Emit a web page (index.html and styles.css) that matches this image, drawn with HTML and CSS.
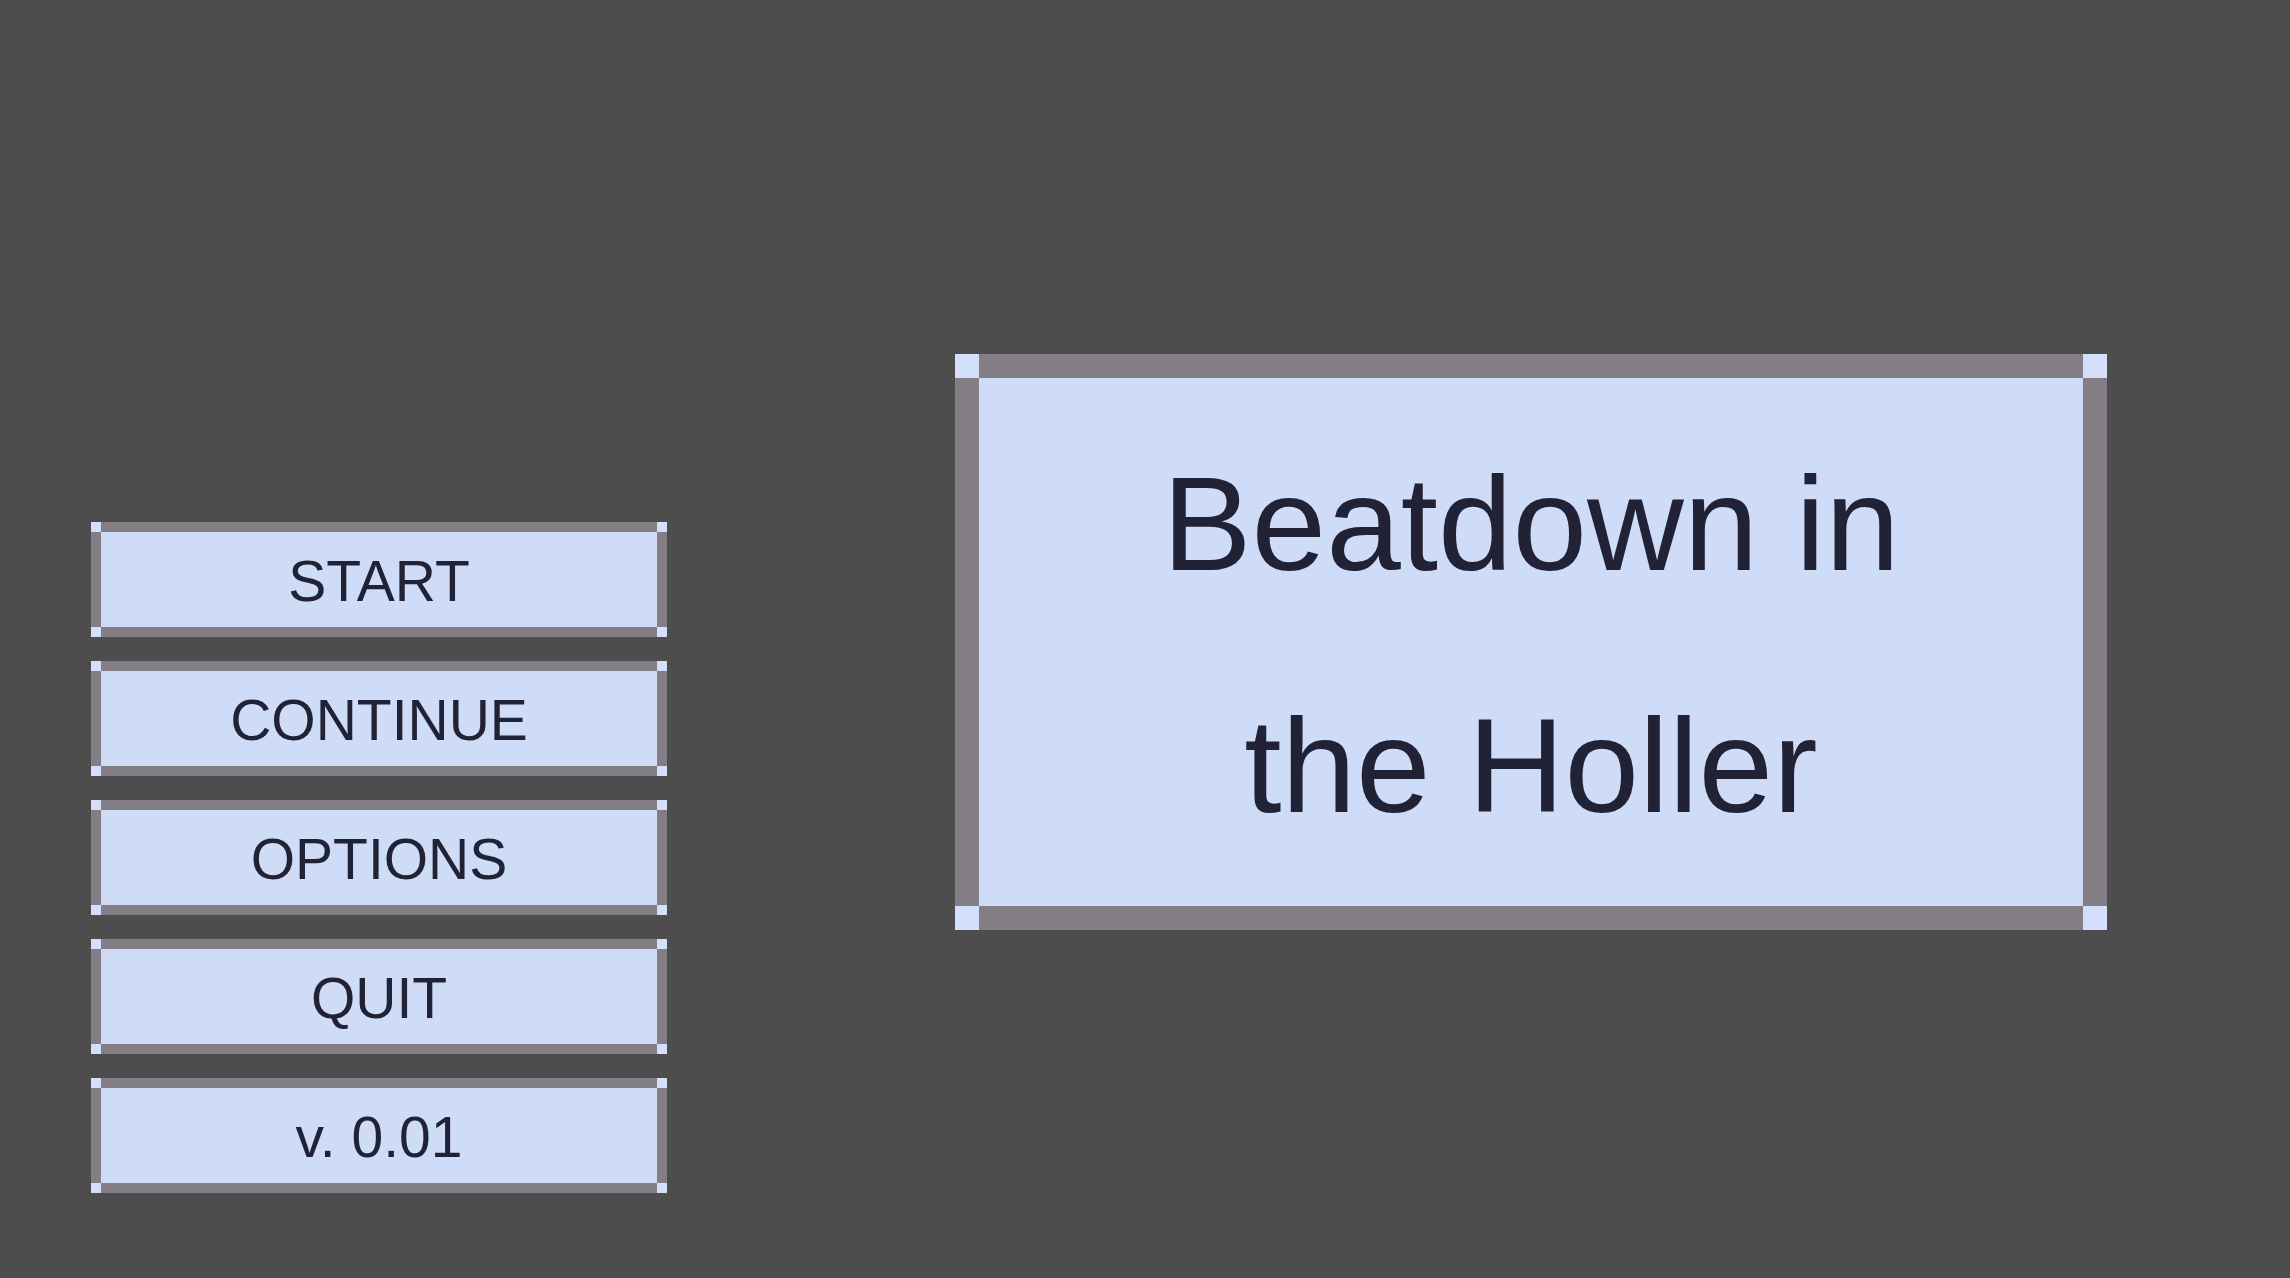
FILE: index.html
```html
<!DOCTYPE html>
<html lang="en">
<head>
    <meta charset="UTF-8">
    <meta name="viewport" content="width=device-width, initial-scale=1.0">
    <title>Beatdown in the Holler</title>
    <link rel="stylesheet" href="styles.css">
</head>
<body>
    <div class="screen">
        <nav class="menu">
            <button class="frame menu-btn" id="start-btn">START</button>
            <button class="frame menu-btn" id="continue-btn">CONTINUE</button>
            <button class="frame menu-btn" id="options-btn">OPTIONS</button>
            <button class="frame menu-btn" id="quit-btn">QUIT</button>
            <div class="frame menu-btn version">v. 0.01</div>
        </nav>
        <div class="frame title-box">
            <h1>Beatdown in<br>the Holler</h1>
        </div>
    </div>
</body>
</html>
```

FILE: styles.css
```css
body {
    margin: 0;
    padding: 0;
    background: #4d4d4d;
    font-family: 'Liberation Sans', Arial, sans-serif;
    color: #222236;
    height: 100vh;
    overflow: hidden;
}
.screen {
    display: flex;
    align-items: flex-start;
    padding-left: 91px;
}

/* pixel frame: grey rim, light corner squares, pale blue fill */
.frame {
    --edge: 10px;
    --rim: #837e86;
    --fill: #cfdcf7;
    --corner: #d4e0fb;
    box-sizing: border-box;
    border: none;
    padding: var(--edge);
    background:
        linear-gradient(var(--rim), var(--rim)) top / calc(100% - 2 * var(--edge)) var(--edge) no-repeat,
        linear-gradient(var(--rim), var(--rim)) bottom / calc(100% - 2 * var(--edge)) var(--edge) no-repeat,
        linear-gradient(var(--rim), var(--rim)) left / var(--edge) calc(100% - 2 * var(--edge)) no-repeat,
        linear-gradient(var(--rim), var(--rim)) right / var(--edge) calc(100% - 2 * var(--edge)) no-repeat,
        linear-gradient(var(--fill), var(--fill)) center / calc(100% - 2 * var(--edge)) calc(100% - 2 * var(--edge)) no-repeat,
        var(--corner);
}

.menu {
    display: flex;
    flex-direction: column;
    gap: 24px;
    margin-top: 522px;
}
.menu-btn {
    width: 576px;
    height: 115px;
    padding-top: 14px;
    font-family: inherit;
    font-size: 57px;
    line-height: 91px;
    color: #222236;
    text-align: center;
    cursor: pointer;
}
.version {
    cursor: default;
}

.title-box {
    --edge: 24px;
    width: 1152px;
    height: 576px;
    margin-top: 354px;
    margin-left: 288px;
    padding-top: 49px;
    text-align: center;
}
.title-box h1 {
    margin: 0;
    font-size: 134px;
    font-weight: normal;
    line-height: 242px;
}
```
